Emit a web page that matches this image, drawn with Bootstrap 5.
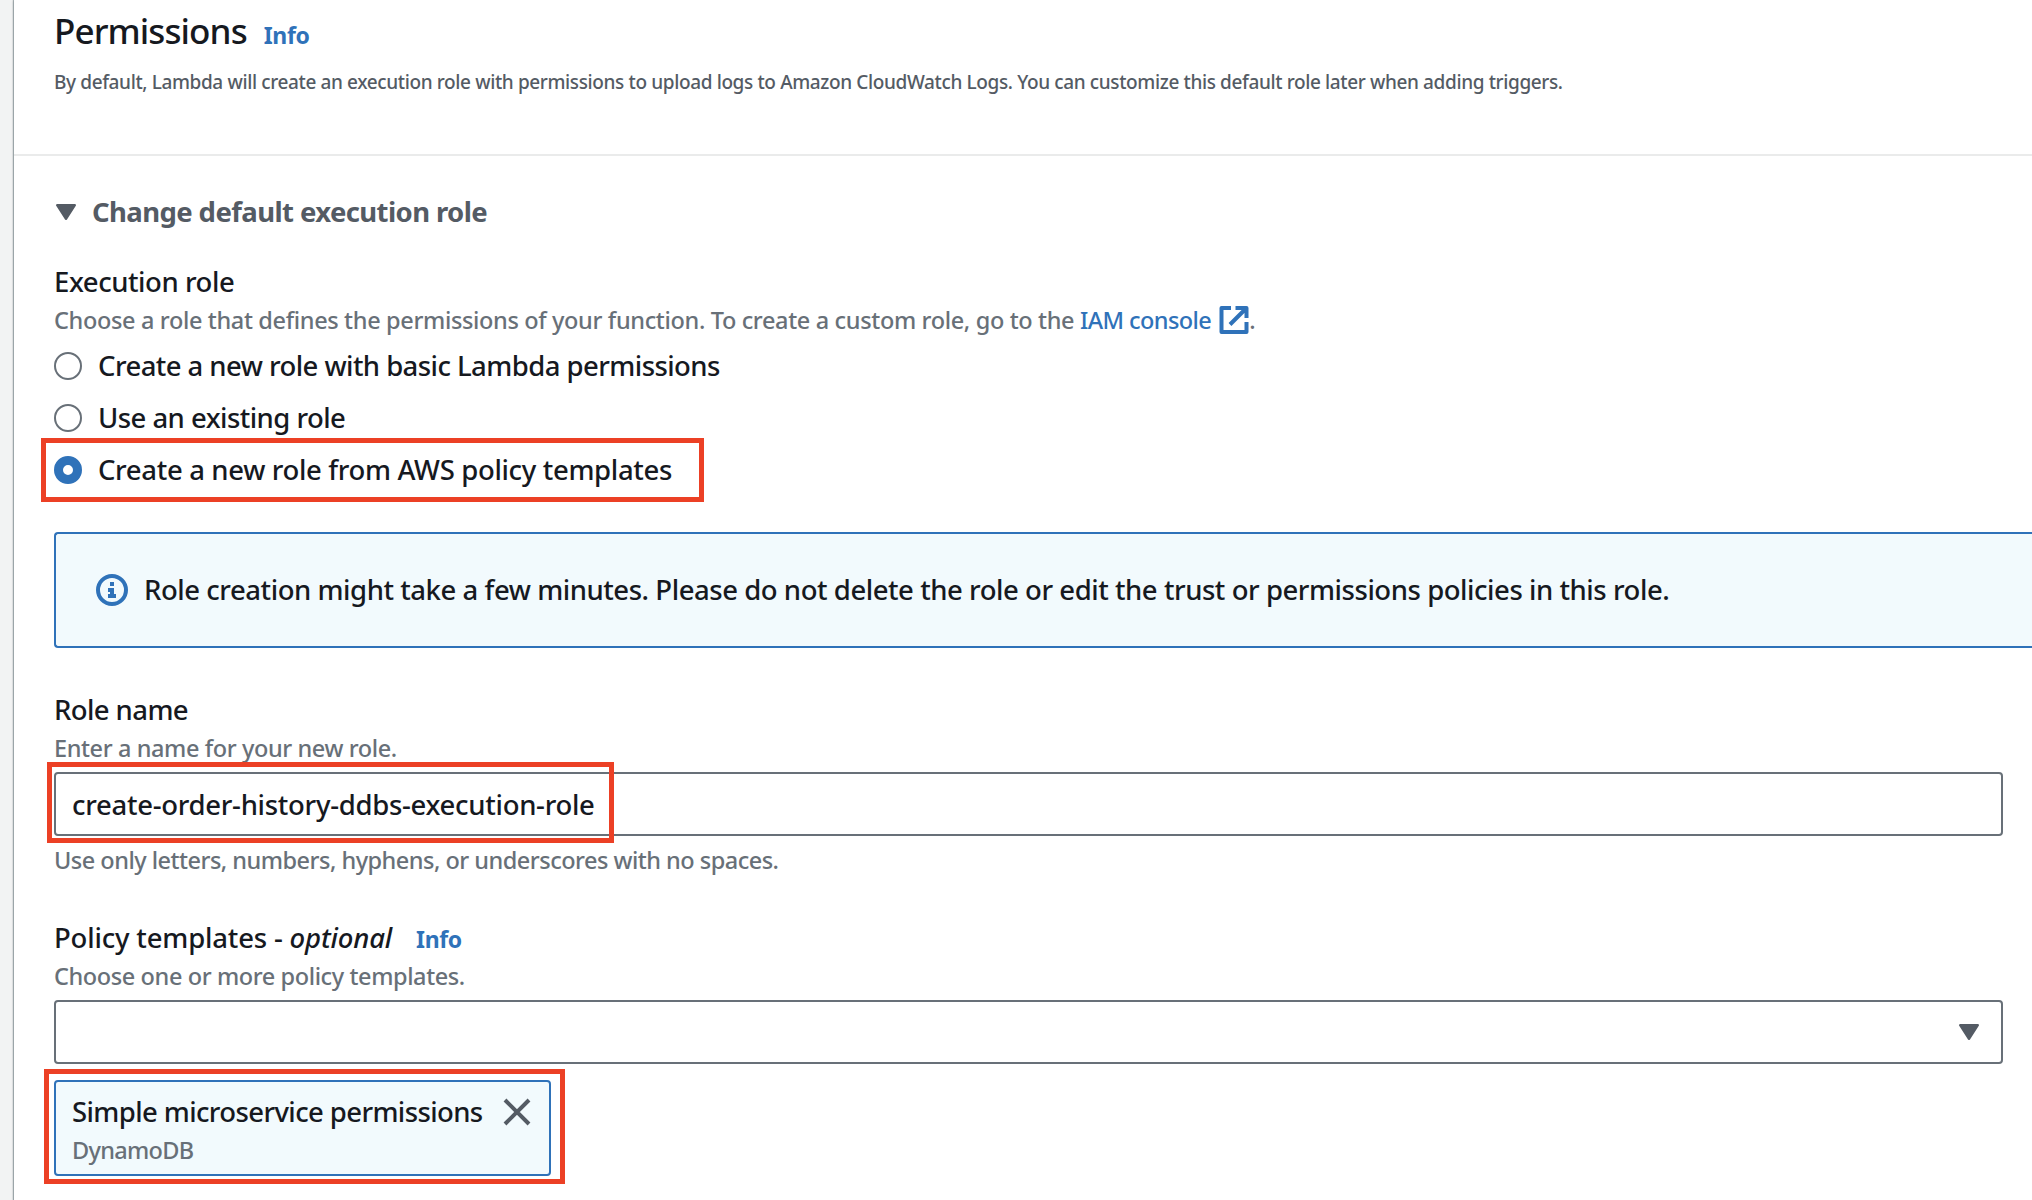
<!DOCTYPE html>
<html lang="en">
<head>
<meta charset="utf-8">
<title>Permissions</title>
<link rel="stylesheet" href="https://cdn.jsdelivr.net/npm/bootstrap@5.3.0/dist/css/bootstrap.min.css">
<style>
  body { font: 500 27.5px/42px "Noto Sans", "Open Sans", sans-serif; color: #16191f; background: #f2f3f3; height: 1200px; overflow: hidden; }
  .panel { margin-left: 14px; height: 1200px; background: #fff; box-shadow: -1px 0 1px rgba(0, 28, 36, .3), -1px 1px 2px rgba(0, 28, 36, .12); }
  .panel-head { height: 156px; padding: 9px 29px 0 40px; border-bottom: 2px solid #eaebeb; }
  .panel-body { padding: 34px 29px 0 40px; }
  .title { font-size: 35px; line-height: 44px; font-weight: 500; letter-spacing: -.9px; margin: 0; }
  .info-link { font-size: 23px; font-weight: 700; letter-spacing: -.35px; }
  a, .info-link { color: #2f72b9; text-decoration: none; }
  .desc { margin-top: 10px; font-size: 19px; line-height: 32px; letter-spacing: -.375px; color: #545b64; }
  .expander { height: 44px; line-height: 44px; font-weight: 700; color: #545b64; letter-spacing: -.6px; gap: 16px; margin-bottom: 26px; }
  .field-name { height: 42px; line-height: 44px; }
  .hint { font-size: 23.5px; line-height: 36px; color: #687078; letter-spacing: -.4px; height: 36px; white-space: nowrap; }
  .choice { height: 52px; gap: 16px; width: max-content; position: relative; }
  .choice .form-check-input { width: 28px; height: 28px; margin: 0; border: 2px solid #687078; box-shadow: none; background-color: #fff; float: none; }
  .choice .form-check-input:checked { border: 9px solid #2f72b9; background: #fff; }
  .notice { height: 116px; margin: 36px -29px 40px 0; padding: 0 40px 0 40px; border: 2px solid #2f72b9; border-right: 0; border-radius: 4px 0 0 4px; background: #f2fafd; gap: 16px; letter-spacing: -.45px; }
  .field { height: 64px; margin: 6px 0; border: 2px solid #687078; border-radius: 4px; padding: 0 16px; font: inherit; color: inherit; letter-spacing: -.29px; background: #fff; }
  .token { width: 497px; height: 96px; margin-top: 16px; border: 2px solid #2f72b9; border-radius: 4px; background: #f2fafd; padding: 9px 18px 7px 16px; }
  .token .hint { margin-top: -1px; letter-spacing: -.7px; }
  .outline { position: absolute; border: 5px solid #ec4025; pointer-events: none; }
  .outline-choice { left: -13px; top: -6px; width: 663px; height: 64px; }
  .outline-field { left: -7px; top: -10px; width: 567px; height: 81px; }
  .outline-token { left: -12px; top: -13px; width: 521px; height: 115px; }
  svg { display: block; flex: none; }
</style>
<script src="https://cdn.jsdelivr.net/npm/bootstrap@5.3.0/dist/js/bootstrap.bundle.min.js"></script>
</head>
<body>
<main class="panel">
  <header class="panel-head">
    <div class="d-flex align-items-baseline">
      <h2 class="title">Permissions</h2>
      <a class="info-link" href="#" style="margin-left:17px">Info</a>
    </div>
    <div class="desc">By default, Lambda will create an execution role with permissions to upload logs to Amazon CloudWatch Logs. You can customize this default role later when adding triggers.</div>
  </header>
  <section class="panel-body">
    <div class="expander d-flex align-items-center">
      <svg width="22" height="16" viewBox="0 0 22 16"><path d="M3.2 1.2H20.8L12 14.8Z" fill="#545b64" stroke="#545b64" stroke-width="2.4" stroke-linejoin="round"/></svg>
      <span>Change default execution role</span>
    </div>

    <div class="field-name" style="letter-spacing:-.44px">Execution role</div>
    <div class="hint d-flex" style="letter-spacing:-.35px"><span>Choose a role that defines the permissions of your function. To create a custom role, go to the&nbsp;</span><a href="#" class="d-flex align-items-center"><span style="letter-spacing:-.58px">IAM console</span><svg style="margin-left:8px" width="30" height="28" viewBox="0 0 30 28"><path d="M12 2H2.500V26H27.500V16M16.500 2H27.500V12M27 2.500L11 18.500" fill="none" stroke="#2f72b9" stroke-width="4" stroke-linejoin="round"/></svg></a><span>.</span></div>

    <div style="margin-top:2px">
      <label class="choice d-flex align-items-center" style="letter-spacing:-.56px"><input class="form-check-input" type="radio" name="role"><span>Create a new role with basic Lambda permissions</span></label>
      <label class="choice d-flex align-items-center" style="letter-spacing:-.54px"><input class="form-check-input" type="radio" name="role"><span>Use an existing role</span></label>
      <label class="choice d-flex align-items-center" style="letter-spacing:-.34px"><input class="form-check-input" type="radio" name="role" checked><span>Create a new role from AWS policy templates</span><span class="outline outline-choice"></span></label>
    </div>

    <div class="notice d-flex align-items-center">
      <svg width="32" height="32" viewBox="0 0 32 32"><circle cx="16" cy="16" r="14" fill="none" stroke="#2f72b9" stroke-width="4"/><path d="M14 8H18V12H14ZM12 14H18V20H20V24H12V20H14V18H12Z" fill="#2f72b9"/></svg>
      <span>Role creation might take a few minutes. Please do not delete the role or edit the trust or permissions policies in this role.</span>
    </div>

    <label for="role-name" class="field-name d-block" style="letter-spacing:-.59px">Role name</label>
    <div class="hint">Enter a name for your new role.</div>
    <div class="position-relative">
      <input id="role-name" class="field d-block w-100" type="text" value="create-order-history-ddbs-execution-role">
      <span class="outline outline-field"></span>
    </div>
    <div class="hint" style="letter-spacing:-.51px">Use only letters, numbers, hyphens, or underscores with no spaces.</div>

    <div class="field-name d-flex align-items-baseline" style="margin-top:38px;letter-spacing:-.18px"><span>Policy templates - <em>optional</em></span><a class="info-link" href="#" style="margin-left:24px">Info</a></div>
    <div class="hint">Choose one or more policy templates.</div>
    <div class="field d-flex align-items-center justify-content-end" style="padding-right:21px">
      <svg width="22" height="16" viewBox="0 0 22 16"><path d="M2.200 1.200H19.800L11 14.800Z" fill="#545b64" stroke="#545b64" stroke-width="2.400" stroke-linejoin="round"/></svg>
    </div>
    <div class="token position-relative">
      <div class="d-flex align-items-center" style="letter-spacing:-.61px"><span>Simple microservice permissions</span><svg class="ms-auto" width="28" height="28" viewBox="0 0 28 28"><path d="M2 2L26 26M26 2L2 26" stroke="#545b64" stroke-width="4" fill="none"/></svg></div>
      <div class="hint">DynamoDB</div>
      <span class="outline outline-token"></span>
    </div>
  </section>
</main>
</body>
</html>
